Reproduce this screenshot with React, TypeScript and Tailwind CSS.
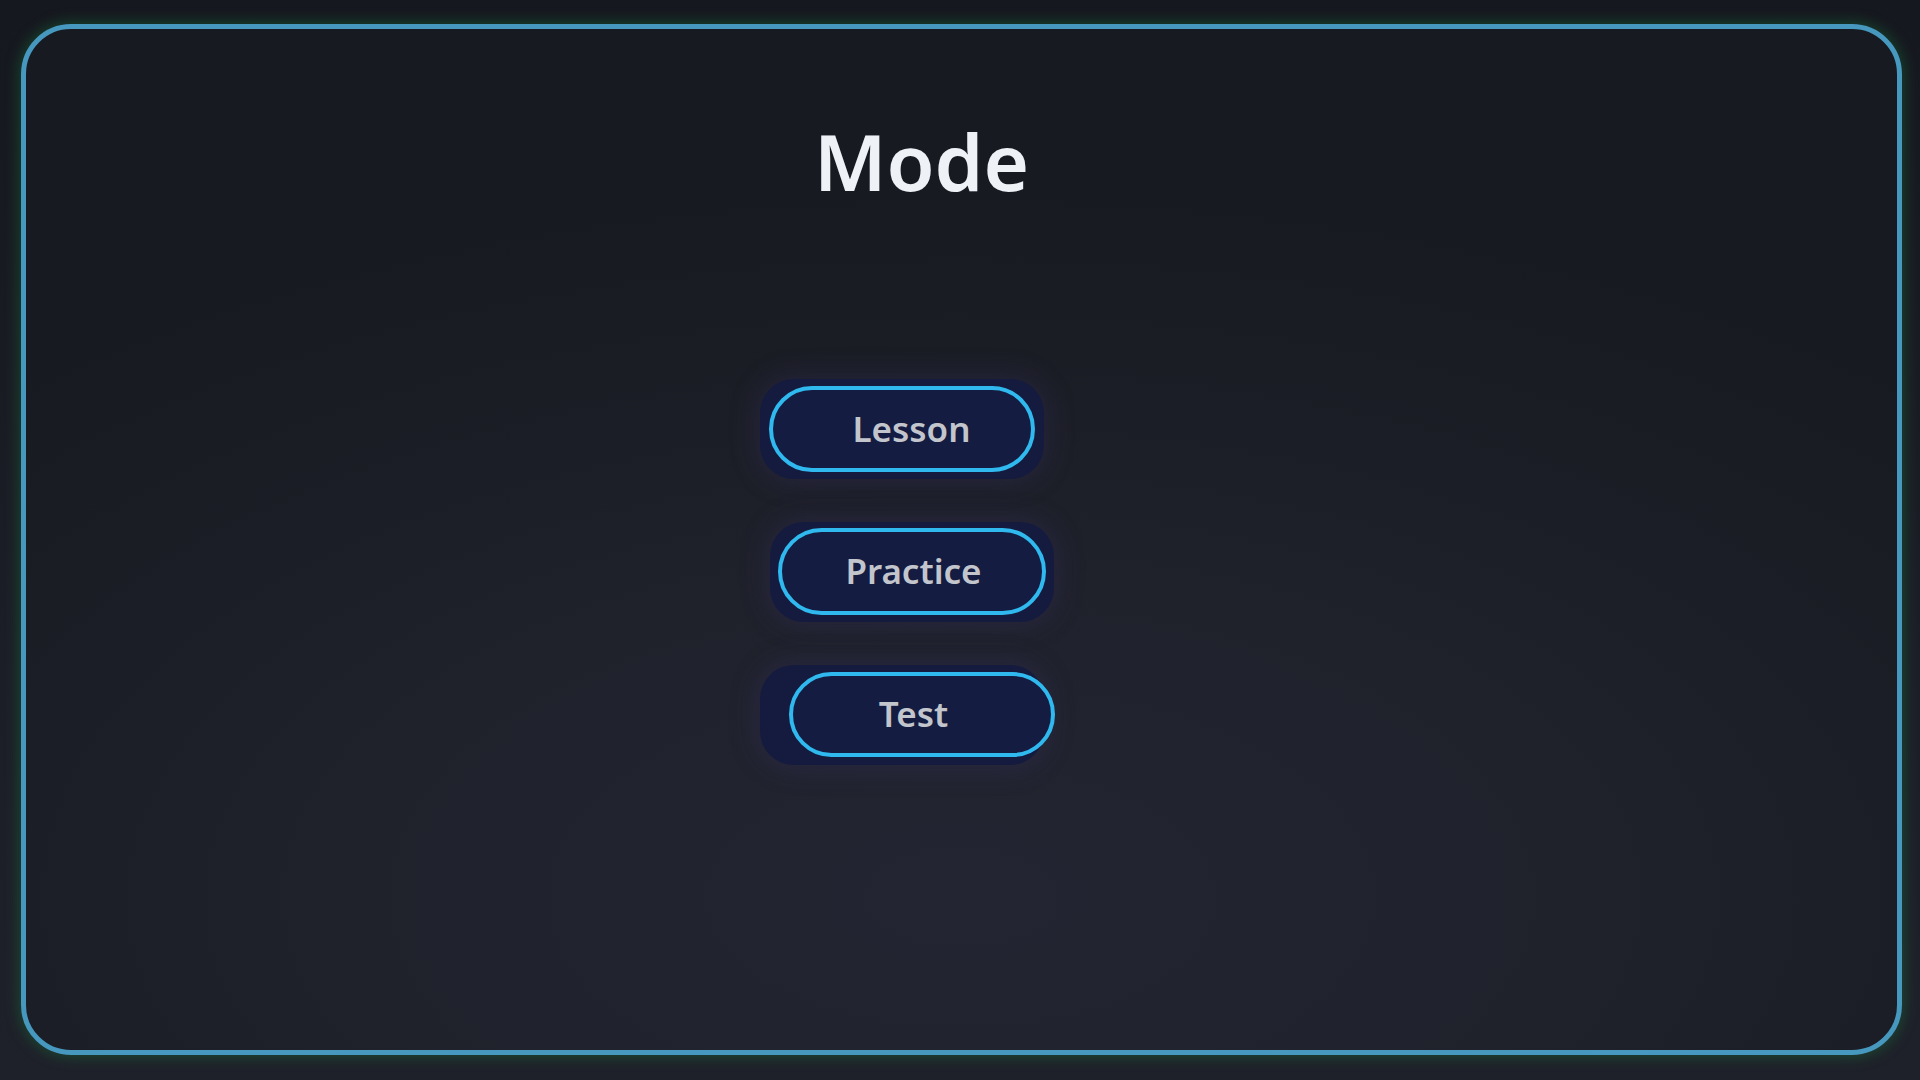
function ModeButton({
  label,
  pad,
  inner,
  text,
}: {
  label: string;
  pad: string;
  inner: string;
  text: string;
}) {
  return (
    <div
      className={`flex h-[100px] w-[284px] shrink-0 items-start rounded-[34px] bg-[#141b3f] shadow-[0_0_24px_6px_rgba(60,50,110,0.25)] ${pad}`}
    >
      <button
        className={`flex shrink-0 items-center justify-center rounded-full border-[4px] border-[#2fb9ee] bg-[#141c42] font-['Noto_Sans',sans-serif] text-[35px] font-semibold text-[#c2c5cc] ${inner}`}
      >
        <span className={text}>{label}</span>
      </button>
    </div>
  );
}

export default function App() {
  return (
    <div className="min-h-screen w-full bg-[linear-gradient(180deg,#16181f_0%,#1c1e27_60%,#1f212a_100%)] pb-[25px] pl-[21px] pr-[18px] pt-[24px]">
      <div className="h-[1031px] w-full rounded-[50px] border-[5px] border-[#4698bf] bg-[radial-gradient(ellipse_75%_70%_at_50%_85%,#232532_0%,#1f212b_45%,#181a21_100%)] shadow-[0_0_14px_2px_rgba(22,120,60,0.45)]">
        <div className="flex flex-col items-center pr-[80px]">
          <h1 className="mt-[82px] font-['Noto_Sans',sans-serif] text-[78px] font-semibold leading-[100px] text-[#eef2f7]">
            Mode
          </h1>
          <div className="mt-[168px] flex flex-col items-center gap-[43px]">
            <div className="mr-[40px]">
              <ModeButton label="Lesson" pad="pl-[9px] pt-[7px]" inner="h-[86px] w-[266px]" text="ml-[20px]" />
            </div>
            <div className="ml-[-20px]">
              <ModeButton label="Practice" pad="pl-[8px] pt-[6px]" inner="h-[87px] w-[268px]" text="ml-[4px]" />
            </div>
            <div className="mr-[40px]">
              <ModeButton label="Test" pad="pl-[29px] pt-[7px]" inner="h-[85px] w-[266px]" text="mr-[16px]" />
            </div>
          </div>
        </div>
      </div>
    </div>
  );
}
